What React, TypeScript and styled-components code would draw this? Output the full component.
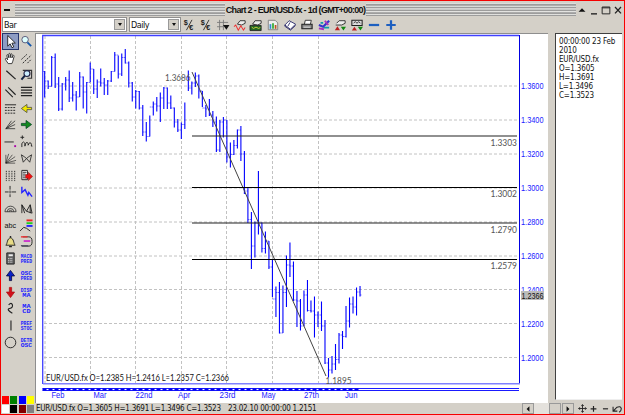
import styled, { createGlobalStyle } from 'styled-components'
import { FC, ReactNode } from 'react'

// high, low and close of every bar, in chart units
const bars: number[][] = [
  [71, 97.5, 81], [80.5, 89, 86.5], [56, 86.5, 57.5], [53.5, 88, 84], [77, 111, 109],
  [83, 110.5, 84], [77, 90.5, 80], [70.5, 102, 98], [82, 101.5, 95], [91, 110.5, 97],
  [72, 97, 77], [76.5, 108.5, 92], [82, 113.5, 82.5], [62.5, 82, 69], [69, 94, 89],
  [79.5, 98, 82], [68.5, 86.5, 83], [78, 95, 85], [80, 95, 81], [71, 82, 71.5],
  [52, 71.5, 55], [55.5, 78.5, 74], [53.5, 76, 57.5], [49, 63.5, 63], [61.5, 87.5, 83],
  [82, 101.5, 97], [90, 108.5, 91.5], [91, 109.5, 108], [105, 136, 132], [122, 141.5, 136.5],
  [115.5, 136.5, 107], [101.5, 115.5, 104], [97, 111.5, 106], [92.5, 122, 98], [87, 109, 88],
  [87.5, 109, 103], [95.5, 109, 108], [107.5, 127.5, 122], [119, 132, 130], [122.5, 139, 124.5],
  [102.5, 129, 77], [70.5, 91, 88], [81.5, 94.5, 83], [72.5, 87, 76], [74.5, 98.5, 91],
  [91, 107, 108], [105, 117, 109], [99, 116, 115], [111, 127, 122], [116.5, 152, 150],
  [120, 152, 122], [117, 137.5, 120], [120, 162.5, 157], [142.5, 167.5, 154.5], [140, 155, 145.5],
  [129.5, 148.5, 130], [126, 161, 154], [151, 194, 191], [188, 223, 219.5], [212, 269, 246],
  [221.5, 257.5, 223], [171, 234.5, 223], [222.5, 252.5, 248.5], [231.5, 253.5, 241], [241, 269, 267],
  [259, 297, 299], [286.5, 317, 292.5], [282, 333.5, 333], [285.5, 333, 292.5], [255.5, 307, 265],
  [242.5, 277, 266], [261.5, 301, 300], [291, 327, 301], [299, 330.5, 326], [290.5, 326, 295],
  [280, 311.5, 310.5], [300.5, 312.5, 311], [296.5, 337.5, 315], [311.5, 327, 315], [301.5, 331, 326],
  [320, 364, 363], [358, 377.5, 370], [356, 373.5, 364], [344, 370, 359.5], [333, 363.5, 335],
  [331, 349, 336.5], [306, 337.5, 321], [297.5, 327.5, 304], [296.5, 313.5, 307], [287.5, 315.5, 292],
  [286, 296.5, 295]
]

const prices: [string, number][] = [
  ['1.3600', 86], ['1.3400', 120], ['1.3200', 154], ['1.3000', 188], ['1.2800', 222],
  ['1.2600', 256], ['1.2400', 289.5], ['1.2200', 323.5], ['1.2000', 357.5]
]

const dates: [string, number, number][] = [
  ['Feb', 51.5, 13], ['Mar', 93.5, 13], ['22nd', 135.5, 17], ['Apr', 178, 12.5],
  ['23rd', 219.5, 16], ['May', 261.5, 14], ['27th', 304, 15], ['Jun', 345, 12.5]
]

const levels: [string, number][] = [
  ['1.3303', 136], ['1.3002', 187.5], ['1.2790', 223], ['1.2579', 259.5]
]

const columns = [45, 90.5, 135.5, 181.5, 226.5, 272.5, 318.5]

const Svg: FC<{ children: ReactNode; size?: number }> = ({ children, size = 14 }) => (
  <svg width={size} height={size} viewBox="0 0 14 14" fill="none" stroke="#222" strokeWidth="1">
    {children}
  </svg>
)

const Label: FC<{ a: string; b: string }> = ({ a, b }) => (
  <Svg>
    <g fill="#1a1aff" stroke="none" fontFamily="Liberation Mono, monospace" fontWeight="700" fontSize="6.5">
      <text x={a.length < 3 ? 2.5 : 0.8} y="6.3" textLength={a.length < 3 ? 9 : 12.2} lengthAdjust="spacingAndGlyphs">{a}</text>
      <text x={b.length < 3 ? 2.5 : 0.8} y="12" textLength={b.length < 3 ? 9 : 12.2} lengthAdjust="spacingAndGlyphs">{b}</text>
    </g>
  </Svg>
)

const Arrow: FC<{ turn: number; color: string; edge: string }> = ({ turn, color, edge }) => (
  <Svg>
    <path
      transform={`rotate(${turn} 7 7)`}
      d="M1.5 5.8h5V2.6L12.5 7l-6 4.4V8.2h-5z"
      fill={color}
      stroke={edge}
      strokeWidth=".8"
    />
  </Svg>
)

const tools: ReactNode[] = [
  <Svg><path d="M4 .5v11.500l2.6-2.500 2 4.200 1.900-.9-2-4 3.700-.2z" fill="#fff" stroke="#111" strokeWidth=".9" /></Svg>,
  <Svg><circle cx="5.5" cy="5" r="3.5" fill="#dff" stroke="#557" /><path d="M8 8l4 4" stroke="#15a" strokeWidth="2" /></Svg>,
  <Svg><path d="M4.5 12.5L1.5 8c-.5-1 .8-1.6 1.6-.6L4 8.5 3 3.8c0-1.3 1.2-1.3 1.5-.2l.6 2.6V2.3c.2-1.2 1.5-1.1 1.6 0v3.8l.6-3.5c.3-1.1 1.5-.8 1.5.3l-.3 3.5 1-2.3c.6-.9 1.7-.4 1.4.6l-1.4 5.2-1 2.6z" fill="#fff" strokeWidth=".9" /></Svg>,
  <Svg><path d="M1.5 8L8 2M3 12l9-8.5M8 12l4-4" strokeDasharray="2 1" /></Svg>,
  <Svg><path d="M2.5 3l10 9" strokeWidth="1.3" /></Svg>,
  <Svg><path d="M3 2.5h9.5V11H8" stroke="#333" strokeWidth="1.2" /><circle cx="7.5" cy="6" r="3.2" fill="#cef" stroke="#224" strokeWidth="1.2" /><path d="M5 8.5L1.5 12.5" stroke="#124" strokeWidth="2.2" /></Svg>,
  <Svg><path d="M1.5 5l8 8M4.5 2.5l8 8" strokeWidth="1.2" /></Svg>,
  <Svg><path d="M1 2.5h12M1 5.5h12M1 8.5h12M1 11.5h12" strokeWidth="1.2" /></Svg>,
  <Svg><path d="M1 3h12" /><path d="M1 6h12M1 9h12M1 12h12" strokeDasharray="2 1" /></Svg>,
  <Arrow turn={180} color="#f2e800" edge="#443" />,
  <Svg><path d="M2 11.5L12 3M2 11.5L12 7M2 11.5h10M2 11.5L8 3" strokeWidth=".8" /></Svg>,
  <Arrow turn={0} color="#138a1e" edge="#042" />,
  <Svg><path d="M.5 7.5h10" /><path d="M12 11v2" stroke="#a0a" strokeWidth="2" /></Svg>,
  <Svg><path d="M2.5 .5v4M.5 2.5h4M2 13V9q1.8-3 3.3 0v3q1-6 3.5-3v2q2-5 3.5-1v2h1" /></Svg>,
  <Svg><path d="M2 12L2 3M2 12L5 2M2 12L9 3M2 12l10-7M2 12l11-3M2 12h10" strokeWidth=".7" /></Svg>,
  <Svg><path d="M1.5 3l2 8 3.5-4 3.5 4 2-8-3 2L7 7 4.5 5z" strokeWidth=".9" /></Svg>,
  <Svg><path d="M2.5 2v11M5.5 2v11M8.5 2v11M11.5 2v11" strokeDasharray="1.5 1" /></Svg>,
  <Svg><path d="M2 1.5h6v10H2z" fill="#fff" /><path d="M3 3.5h4M3 5.5h3M3 7.5h3M3 9.5h3" /><path d="M6 6h3V3.5L13.5 8 9 12.5V10H6z" fill="#e11" stroke="#711" strokeWidth=".5" /></Svg>,
  <Svg><path d="M6.5 1v4M6.5 6v3M6.5 10v3M1 7.5h4M8 7.5h5" /></Svg>,
  <Svg><path d="M2 2v6l3.5-3 3 6L9.5 8l3.5 4.5" stroke="#22f" strokeWidth="1.5" /></Svg>,
  <Svg><path d="M1 10.5a6 6 0 0 1 12 0M3.5 10.5a3.5 3.5 0 0 1 7 0M5.5 10.5a1.5 1.5 0 0 1 3 0M1 10.5h12" strokeWidth=".8" /></Svg>,
  <Svg><path d="M2 12V3l5 7 4-7v9M2 3l3 9M11 3l2 9M7 10l6 2" strokeWidth="1" /></Svg>,
  <Svg><text x=".5" y="9.5" fontFamily="Liberation Sans, sans-serif" fontSize="8" fill="#111" stroke="none" textLength="12.5" lengthAdjust="spacingAndGlyphs">abc</text></Svg>,
  <Svg><path d="M7 1.5h6.5" stroke="#e22" strokeWidth="2" /><path d="M7 4.5h6.5" stroke="#2c2" strokeWidth="2" /><path d="M7 7.5h6.5" stroke="#22f" strokeWidth="2" /><path d="M0 13l4-4 3 1 4 3" /></Svg>,
  <Svg><path d="M2 11c2-2 1-7 5-8 4 1 3 6 5 8z" fill="#e8dc85" /><path d="M7 1v2M5.5 12.5h3" strokeWidth="1.5" /></Svg>,
  <Svg><path d="M3 2h6.5q3.5 0 3.5 5t-3.5 5H2" /><path d="M1 2h7" stroke="#e33" strokeWidth="1.5" /><path d="M4 6.5h7" stroke="#c3c" strokeWidth="2" /><path d="M1 11.5h8" stroke="#556" strokeWidth="1.5" /></Svg>,
  <Svg><path d="M3 1h8v12H3z" fill="#666" /><path d="M5 3.5h4.5" stroke="#eee" strokeWidth="2" /><path d="M4.5 7h5M4.5 9h5M4.5 11h5" stroke="#ddd" strokeDasharray="1 .7" /></Svg>,
  <Label a="MACD" b="PRED" />,
  <Arrow turn={-90} color="#0a22c8" edge="#003" />,
  <Label a="OSC" b="PRED" />,
  <Arrow turn={90} color="#d40f1a" edge="#a11" />,
  <Label a="DISP" b="MA" />,
  <Svg><path d="M5 3q3-3 4 0t-3 4 3 5" strokeWidth="1.2" /></Svg>,
  <Label a="MA" b="CD" />,
  <Svg><path d="M7.5 1.5v11" strokeWidth="1.2" /></Svg>,
  <Label a="PREF" b="STOC" />,
  <Svg><circle cx="7" cy="7" r="5.7" /></Svg>,
  <Label a="DETR" b="OSC" />
]

const Currency = () => (
  <Svg>
    <g fontFamily="Liberation Sans, sans-serif" fill="#222" stroke="none" fontWeight="700">
      <text x="1" y="7.5" fontSize="8.5">$</text>
      <text x="7" y="13" fontSize="9">€</text>
    </g>
    <path d="M10.5 1L4 13" />
  </Svg>
)

const actions: ReactNode[] = [
  <Currency />,
  <Currency />,
  <Svg><path d="M3 1v12M7.5 1v12M0 4h13M0 9h8" stroke="#777" /><path d="M7 7h7.5L11 12.5z" fill="#111" stroke="none" /></Svg>,
  <Svg><path d="M4 6l3-4h6v3L9 7z" fill="#eee" /><path d="M0 9l2-2 3 6 3-5 3 5 2-3" stroke="#e33" strokeWidth="1.2" /></Svg>,
  <Svg><path d="M3 6l3-4h7v3L9 7z" fill="#eee" /><path d="M0 7.5h13v6H0z" fill="#262" /><path d="M2 9.5l2 1.5 3-1.5 3 1.5 2-1" stroke="#dd4" /></Svg>,
  <Svg><path d="M1.5 1.5h8l3 3v8h-11z" fill="#eee" stroke="#777" /><path d="M4 11.5V6" stroke="#38c" strokeWidth="2" /><path d="M7 11.5V5" stroke="#3a3" strokeWidth="2" /><path d="M10 11.5V7" stroke="#b52" strokeWidth="2" /></Svg>,
  <Svg><path d="M1 7l5-5 7.5 4-6 6z" fill="#fff" stroke="#226" /><path d="M1 7v1.5L7.5 13l6-5.5M7 4L4.5 8.5" stroke="#226" /></Svg>,
  <Svg><path d="M4 6l1-4.5h7L11 6" fill="#fff" /><path d="M1 6h12v5.5H1z" fill="#888" strokeWidth="1.2" /><path d="M3 9.5h8" stroke="#eee" /></Svg>,
  <Svg><path d="M1 7l5 2 7-7" stroke="#33c" strokeWidth="2.5" /><path d="M8 2l4 5M1 11l6 1" stroke="#a3b" strokeWidth="2.2" /><path d="M7 10h6M3 4.5h3" stroke="#19a" strokeWidth="2" /></Svg>,
  <Svg><path d="M3 5l3-3h7v3L9 7H2" fill="#eee" /><path d="M1 13l3-4.5L7 13z" fill="#b22" stroke="none" /><path d="M8 9h6l-3 4.5z" fill="#181" stroke="none" /></Svg>,
  <Svg><path d="M1 1.5h12v6H1z" fill="#ddd" strokeWidth="1.2" /><path d="M3 5l2-2 2 2 2-2 2 2" /><path d="M1 13.5L4 9l3 4.5z" fill="#b22" stroke="none" /><path d="M8 9h6l-3 4.5z" fill="#181" stroke="none" /></Svg>,
  <Svg><path d="M1 7h12" stroke="#1d5fc0" strokeWidth="2.6" /></Svg>,
  <Svg><path d="M1.500 7h11M7 1.500v11" stroke="#1d5fc0" strokeWidth="2.6" /></Svg>
]

const Chart = () => (
  <svg width="512" height="369" viewBox="36 34 512 369" fill="none">
    <g stroke="#c2c2c2" strokeDasharray="3 2">
      {columns.map((x) => <path key={x} d={`M${x} 36V383`} />)}
      {prices.map(([p, y]) => <path key={p} d={`M44 ${y}H518`} />)}
    </g>
    <path d="M42.7 384V35.5H519" stroke="#4040ff" strokeWidth="1.3" />
    <path d="M519.5 35V384" stroke="#0000e0" />
    <path d="M43 383.8H520" stroke="#8080ff" strokeWidth="1.6" />
    <path d="M42.5 388.5H519M42.5 390.5H519" stroke="#1a1aff" />
    <path d="M42.5 389.5H360" stroke="#0000ee" strokeWidth="2" strokeDasharray="4 2" />
    {bars.map(([high, low, close], i) => {
      const x = 44.67 + i * 3.504
      const open = i ? bars[i - 1][2] : 71.5
      return (
        <g key={i} stroke="#0000ff">
          <path d={`M${x} ${high}V${low}`} strokeWidth="1.1" />
          <path d={`M${x - 1.5} ${open}H${x}M${x} ${close}h1.5`} strokeWidth=".7" opacity=".75" />
        </g>
      )
    })}
    <path d="M192 72L326 376" stroke="#444" />
    {levels.map(([text, y], i) => (
      <g key={text}>
        <path d={`M192 ${y}H517`} stroke={i % 2 ? '#000' : '#222'} strokeWidth="1.15" />
        <LevelText x="490.5" y={y + 9.5} textLength="26.5" lengthAdjust="spacingAndGlyphs">{text}</LevelText>
      </g>
    ))}
    <LevelText x="165" y="80.5" textLength="25.5" lengthAdjust="spacingAndGlyphs">1.3686</LevelText>
    <LevelText x="325.5" y="383.7" textLength="26" lengthAdjust="spacingAndGlyphs">1.1895</LevelText>
    <Readout x="46" y="381.3" textLength="183" lengthAdjust="spacingAndGlyphs">EUR/USD.fx O=1.2385 H=1.2416 L=1.2357 C=1.2366</Readout>
    {prices.map(([p, y]) => (
      <AxisText key={p} x="521" y={y + 3} textLength="22.5" lengthAdjust="spacingAndGlyphs">{p}</AxisText>
    ))}
    <path d="M521 291h23v9h-23z" fill="#bbb" />
    <AxisText $current x="521.5" y="298.5" textLength="22" lengthAdjust="spacingAndGlyphs">1.2366</AxisText>
    {dates.map(([d, x, w]) => (
      <AxisText key={d} x={x} y="398" textLength={w} lengthAdjust="spacingAndGlyphs">{d}</AxisText>
    ))}
  </svg>
)

export default function App() {
  return (
    <Window>
      <GlobalStyle />
      <TitleBar>
        <SystemButton><Dash /></SystemButton>
        <Stripes $width={210} />
        <Title>Chart 2 - EUR/USD.fx - 1d (GMT+00:00)</Title>
        <Stripes />
        <Controls>
          <Svg size={12}><path d="M3 9l4-4 4 4z" fill="#111" stroke="none" /></Svg>
          <Svg size={12}><path d="M3.5 11.5h7" strokeWidth="1.6" /></Svg>
          <Svg size={12}><path d="M2.5 3.5h9v8h-9zM2.5 4.5h9" strokeWidth="1.1" /></Svg>
          <Svg size={12}><path d="M3.5 3.5l7 7.5M10.5 3.5l-7 7.5" strokeWidth="1.5" /></Svg>
        </Controls>
      </TitleBar>
      <Toolbar>
        <Select $width={125}><span>Bar</span><DropButton /></Select>
        <Select $width={52}><span>Daily</span><DropButton /></Select>
        <Actions>{actions.map((icon, i) => <Action key={i}>{icon}</Action>)}</Actions>
      </Toolbar>
      <Body>
        <Sidebar>
          <Tools>{tools.map((icon, i) => <Tool key={i} $active={i === 0}>{icon}</Tool>)}</Tools>
          <Palette>
            {['#f00', '#008000', '#00f', '#ff0', '#fff', '#000', '#800000', '#808080'].map((c) => (
              <Swatch key={c} $color={c} />
            ))}
          </Palette>
        </Sidebar>
        <Workspace>
          <Panes>
            <ChartPane><Chart /></ChartPane>
            <DataPane>
              00:00:00 23 Feb<br />2010<br />EUR/USD.fx<br />O=1.3605<br />H=1.3691<br />L=1.3496<br />C=1.3523
            </DataPane>
          </Panes>
          <StatusBar>
            <Status $width={192}>EUR/USD.fx O=1.3605 H=1.3691 L=1.3496 C=1.3523</Status>
            <Status $width={295}>23.02.10 00:00:00 1.2151</Status>
            <ScrollButton><Svg size={10}><path d="M9 3v8L5 7z" fill="#111" stroke="none" /></Svg></ScrollButton>
            <Track><ScrollButton /></Track>
            <ScrollButton><Svg size={10}><path d="M5 3v8l4-4z" fill="#111" stroke="none" /></Svg></ScrollButton>
            <Navigation>
              <Svg size={9}><path d="M7 1v12M1 7h12M5 3l2-2 2 2M5 11l2 2 2-2M3 5L1 7l2 2M11 5l2 2-2 2" strokeWidth="1.4" /></Svg>
              <Svg size={9}><path d="M7 3v9M2.5 7.5h9" strokeWidth="1.8" /></Svg>
              <Svg size={9}><path d="M3 7.5h8" strokeWidth="1.8" /></Svg>
              <Svg size={10}><path d="M1.5 4v6h6M2 9.5l5-5q5-2 6 2 0 3-3 5" strokeWidth="1.5" /></Svg>
            </Navigation>
          </StatusBar>
        </Workspace>
      </Body>
    </Window>
  )
}

const GlobalStyle = createGlobalStyle`
  * {
    box-sizing: border-box;
  }

  body {
    margin: 0;
    overflow: hidden;
  }

  svg {
    display: block;
    flex: none;
    overflow: visible;
  }
`

const Window = styled.div`
  width: 625px;
  height: 415px;
  display: flex;
  flex-direction: column;
  border: 1px solid #f50000;
  background: #d4d0c8;
  color: #111;
  font-family: 'DejaVu Sans Condensed', 'DejaVu Sans', sans-serif;
  font-size: 9px;
  white-space: nowrap;
`

const TitleBar = styled.div`
  height: 16px;
  padding-top: 2px;
  display: flex;
  flex: none;
`

const SystemButton = styled.div`
  width: 14px;
  display: flex;
  align-items: center;
  padding-left: 3px;
`

const Dash = styled.div`
  width: 6px;
  height: 2px;
  background: #111;
`

const Stripes = styled.div<{ $width?: number }>`
  flex: ${({ $width }) => ($width ? `0 0 ${$width}px` : '1')};
  margin-bottom: 1px;
  background: repeating-linear-gradient(#e4e4e2 0, #d8d8d6 0.8px, #9c9c9c 1.2px, #9c9c9c 2.4px, #e4e4e2 2.8px);
`

const Title = styled.div`
  width: 141px;
  flex: none;
  display: flex;
  justify-content: center;
  font: 700 9px/14px 'Liberation Sans', sans-serif;
  letter-spacing: -0.7px;
`

const Controls = styled.div`
  width: 48px;
  display: flex;
  align-items: center;
`

const Toolbar = styled.div`
  height: 16px;
  display: flex;
  flex: none;
  padding-left: 1px;
  gap: 2px;
`

const Select = styled.div<{ $width: number }>`
  width: ${({ $width }) => $width}px;
  height: 15px;
  display: flex;
  justify-content: space-between;
  align-items: center;
  padding: 1px 1px 1px 1px;
  border: 1px solid #909090;
  background: #fff;
  font-size: 9px;
  letter-spacing: -0.5px;
`

const DropButton = styled.div`
  width: 11px;
  height: 11px;
  display: grid;
  place-items: center;
  border: 1px solid #999;
  background: #d4d0c8;

  &::before {
    content: '';
    border: 2.5px solid transparent;
    border-top: 3px solid #111;
    border-bottom: 0;
  }
`

const Actions = styled.div`
  display: flex;
  margin-left: -2px;
`

const Action = styled.div`
  width: 16.77px;
  height: 15px;
  display: grid;
  place-items: center;

  svg {
    width: 12px;
    height: 12px;
  }
`

const Body = styled.div`
  flex: 1;
  display: flex;
  min-height: 0;
`

const Sidebar = styled.div`
  width: 34px;
  flex: none;
  display: flex;
  flex-direction: column;
  justify-content: space-between;
  padding-left: 1px;
`

const Tools = styled.div`
  display: grid;
  grid-template-columns: repeat(2, 16.5px);
  grid-auto-rows: 16.72px;
`

const Tool = styled.div<{ $active: boolean }>`
  display: grid;
  place-items: center;
  border: 1px solid ${({ $active }) => ($active ? '#26366e' : 'transparent')};
  background: ${({ $active }) => ($active ? '#8d9cc4' : 'none')};

  svg {
    width: 13px;
    height: 13px;
  }
`

const Palette = styled.div`
  display: grid;
  grid-template-columns: repeat(4, 7px);
  grid-auto-rows: 8px;
  gap: 1.3px;
  padding-bottom: 1px;
`

const Swatch = styled.div<{ $color: string }>`
  background: ${({ $color }) => $color};
`

const Workspace = styled.div`
  flex: 1;
  min-width: 0;
  display: flex;
  flex-direction: column;
`

const Panes = styled.div`
  height: 370px;
  display: flex;
  justify-content: space-between;
`

const ChartPane = styled.div`
  width: 513px;
  background: #fff;
  border-left: 1px solid #8e8e8e;
  border-top: 1px solid #8e8e8e;
`

const DataPane = styled.div`
  width: 67px;
  height: 367px;
  margin-right: 2px;
  padding: 3px 0 0 3px;
  border-left: 1px solid #404040;
  border-top: 1px solid #404040;
  border-bottom: 1px solid #eee;
  background: #fff;
  line-height: 9.05px;
  font-size: 8px;
  letter-spacing: -0.18px;
`

const StatusBar = styled.div`
  flex: 1;
  display: flex;
  align-items: center;
`

const Status = styled.div<{ $width: number }>`
  width: ${({ $width }) => $width}px;
  flex: none;
  padding-left: 1px;
  font-size: 8px;
  line-height: 10px;
  letter-spacing: -0.24px;
`

const ScrollButton = styled.div`
  width: 12px;
  height: 11px;
  display: grid;
  place-items: center;
  border: 1px solid #999;
  background: #d4d0c8;
`

const Track = styled.div`
  width: 27px;
  margin-right: 1px;
  display: flex;
  justify-content: flex-end;
  background: #e4e1dc;
`

const Navigation = styled.div`
  flex: 1;
  display: flex;
  align-items: center;
  justify-content: space-between;
  padding: 0 2px 0 4px;
`

const LevelText = styled.text`
  font: 9.5px Lato, sans-serif;
  fill: #555;
`

const Readout = styled.text`
  font: 8.5px Lato, sans-serif;
  fill: #111;
`

const AxisText = styled.text<{ $current?: boolean }>`
  font: 8.5px 'Liberation Sans', sans-serif;
  fill: ${({ $current }) => ($current ? '#111' : '#1a1aff')};
`
